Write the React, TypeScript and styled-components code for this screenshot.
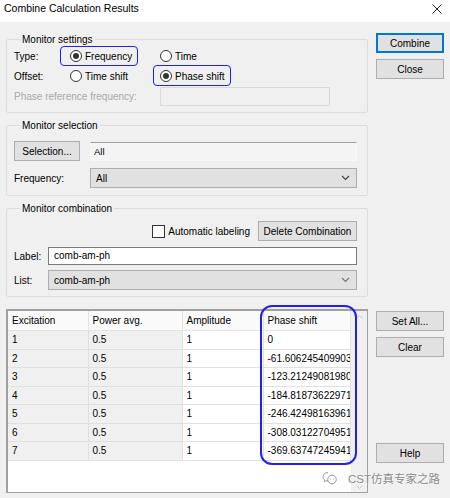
import { createGlobalStyle, styled } from "styled-components";

const GlobalStyle = createGlobalStyle`
  html, body {
    margin: 0;
    padding: 0;
    background: #f0f0f0;
  }
`;

const Dialog = styled.div`
  position: relative;
  width: 450px;
  height: 498px;
  overflow: hidden;
  background: #f0f0f0;
  color: #000;
  font-family: "Liberation Sans", Arial, sans-serif;
  font-size: 10px;
`;

const TitleBar = styled.div`
  display: flex;
  height: 22px;
  box-sizing: border-box;
  align-items: flex-start;
  justify-content: space-between;
  padding: 1px 8px 0 4px;
  background: #fff;
  font-size: 10.5px;
  line-height: 14px;
`;

const Body = styled.div`
  display: grid;
  grid-template-columns: 362px 68px;
  column-gap: 8px;
  padding-left: 6px;
`;

const LeftColumn = styled.div`
  display: flex;
  flex-direction: column;
`;

const ButtonColumn = styled.div<{ $top: number }>`
  display: flex;
  flex-direction: column;
  gap: 6px;
  padding-top: ${({ $top }) => $top}px;
`;

const Group = styled.fieldset<{ $top: number; $pad: string }>`
  margin: ${({ $top }) => $top}px 0 0;
  padding: ${({ $pad }) => $pad};
  min-width: 0;
  border: 1px solid #dcdcdc;
  border-radius: 2px;
`;

const Legend = styled.legend`
  margin-left: 6px;
  padding: 0 2px;
  line-height: 13px;
`;

const SettingsGrid = styled.div`
  display: grid;
  grid-template-columns: 56px 90px 1fr;
  grid-auto-rows: 20px;
  align-items: center;
`;

const Label = styled.span<{ $disabled?: boolean; $span?: number }>`
  grid-column: span ${({ $span }) => $span ?? 1};
  color: ${({ $disabled }) => ($disabled ? "#a8a8a8" : "#000")};
  white-space: nowrap;
`;

const RadioOption = styled.label<{ $mark?: string }>`
  position: relative;
  display: inline-flex;
  align-items: center;
  gap: 3px;
  height: 20px;
  white-space: nowrap;

  &::after {
    content: "";
    display: ${({ $mark }) => ($mark ? "block" : "none")};
    position: absolute;
    inset: ${({ $mark }) => $mark ?? "0"};
    border: 1.5px solid #2020f0;
    border-radius: 4px;
  }
`;

const RadioCircle = styled.span<{ $checked?: boolean }>`
  display: inline-grid;
  width: 12px;
  height: 12px;
  box-sizing: border-box;
  place-items: center;
  border: 1px solid #333;
  border-radius: 50%;
  background: #fff;

  &::before {
    content: "";
    display: ${({ $checked }) => ($checked ? "block" : "none")};
    width: 6px;
    height: 6px;
    border-radius: 50%;
    background: #333;
  }
`;

const DisabledInput = styled.div`
  width: 170px;
  height: 19px;
  box-sizing: border-box;
  border: 1px solid #d9d9d9;
  background: #f0f0f0;
`;

const FormRows = styled.div<{ $labelWidth: number; $gap: number }>`
  display: grid;
  grid-template-columns: ${({ $labelWidth }) => $labelWidth}px 1fr;
  row-gap: ${({ $gap }) => $gap}px;
  align-items: center;
`;

const Button = styled.button<{ $focused?: boolean; $width?: number; $push?: number }>`
  width: ${({ $width }) => ($width ? `${$width}px` : "100%")};
  height: 20px;
  box-sizing: border-box;
  margin-top: ${({ $push }) => $push ?? 0}px;
  padding: 0 4px;
  border: 1px solid ${({ $focused }) => ($focused ? "#0078d7" : "#adadad")};
  box-shadow: ${({ $focused }) => ($focused ? "inset 0 0 0 1px #0078d7" : "none")};
  background: #e1e1e1;
  color: #000;
  font-family: inherit;
  font-size: 10px;
  white-space: nowrap;
`;

const ReadOnlyField = styled.div`
  height: 19px;
  box-sizing: border-box;
  padding: 2px 3px;
  border: 1px solid #f8f8f8;
  border-top-color: #a0a0a0;
  background: #f4f4f4;
  font-size: 9.5px;
  line-height: 14px;
`;

const TextField = styled.div`
  height: 18px;
  box-sizing: border-box;
  padding: 1px 5px;
  border: 1px solid #7a7a7a;
  background: #fff;
  line-height: 14px;
`;

const Combo = styled.div`
  display: flex;
  height: 20px;
  box-sizing: border-box;
  align-items: center;
  justify-content: space-between;
  padding: 0 6px 0 5px;
  border: 1px solid #adadad;
  background: #e1e1e1;
`;

const CheckRow = styled.div`
  display: flex;
  align-items: center;
  justify-content: flex-end;
  gap: 8px;
  margin-bottom: 6px;
`;

const CheckLabel = styled.label`
  display: inline-flex;
  align-items: center;
  gap: 3px;
  white-space: nowrap;
`;

const CheckBox = styled.span`
  width: 13px;
  height: 13px;
  box-sizing: border-box;
  border: 1px solid #333;
  background: #fff;
`;

const TableArea = styled.div`
  position: relative;
  margin-top: 12px;
`;

const TableFrame = styled.div`
  display: flex;
  height: 184px;
  box-sizing: border-box;
  border: 1px solid #a0a0a0;
  border-top-width: 2px;
  border-left-width: 2px;
  background: #fff;
`;

const Table = styled.table`
  width: 342px;
  align-self: flex-start;
  border-collapse: collapse;
  table-layout: fixed;
  font-size: 10px;
`;

const HeadCell = styled.th`
  height: 19px;
  padding: 0 4px;
  border-right: 1px solid #e3e3e3;
  border-bottom: 1px solid #e3e3e3;
  background: #fafafa;
  font-weight: 400;
  text-align: left;
  white-space: nowrap;
`;

const Cell = styled.td<{ $shaded?: boolean }>`
  height: 17.5px;
  padding: 0 4px;
  overflow: hidden;
  border-right: 1px solid #e0e0e0;
  border-bottom: 1px solid #e0e0e0;
  background: ${({ $shaded }) => ($shaded ? "#f0f0f0" : "#fff")};
  text-overflow: clip;
  white-space: nowrap;
`;

const ScrollTrack = styled.div`
  display: flex;
  width: 16px;
  flex-direction: column;
  align-items: center;
  justify-content: space-between;
  padding: 4px 0 3px;
  margin-left: auto;
  background: #f0f0f0;
`;

const ColumnMark = styled.div`
  position: absolute;
  top: -4px;
  left: 254px;
  width: 97px;
  height: 160px;
  box-sizing: border-box;
  border: 2px solid #2020f0;
  border-radius: 12px;
  pointer-events: none;
`;

const Watermark = styled.div`
  position: absolute;
  top: 470px;
  left: 322px;
  display: flex;
  align-items: center;
  gap: 10px;
  color: #8a8a8a;
  font-family: "Liberation Sans", "Noto Sans CJK SC", sans-serif;
  font-size: 11.5px;
  text-shadow: 0 0 2px #fff;
`;

const Chevron = ({ color = "#555" }: { color?: string }) => (
  <svg width="9" height="6" viewBox="0 0 9 6">
    <path d="M1 1l3.5 3.5L8 1" fill="none" stroke={color} strokeWidth="1.2" />
  </svg>
);

const rows = [
  ["1", "0"],
  ["2", "-61.6062454099033"],
  ["3", "-123.212490819807"],
  ["4", "-184.818736229710"],
  ["5", "-246.424981639614"],
  ["6", "-308.031227049517"],
  ["7", "-369.637472459410"],
];

export default function App() {
  return (
    <Dialog>
      <GlobalStyle />
      <TitleBar>
        <span>Combine Calculation Results</span>
        <svg width="10" height="10" viewBox="0 0 10 10" style={{ marginTop: 3 }}>
          <path d="M0.5 0.5l9 9M9.5 0.5l-9 9" stroke="#222" strokeWidth="1" />
        </svg>
      </TitleBar>
      <Body>
        <LeftColumn>
          <Group $top={11} $pad="0 7px 6px 7px">
            <Legend>Monitor settings</Legend>
            <SettingsGrid>
              <Label>Type:</Label>
              <div>
                <RadioOption $mark="0 -6px 0 -10px">
                  <RadioCircle $checked />
                  Frequency
                </RadioOption>
              </div>
              <div>
                <RadioOption>
                  <RadioCircle />
                  Time
                </RadioOption>
              </div>
              <Label>Offset:</Label>
              <div>
                <RadioOption>
                  <RadioCircle />
                  Time shift
                </RadioOption>
              </div>
              <div>
                <RadioOption $mark="-1px -7px 0 -7px">
                  <RadioCircle $checked />
                  Phase shift
                </RadioOption>
              </div>
              <Label $disabled $span={2}>
                Phase reference frequency:
              </Label>
              <DisabledInput />
            </SettingsGrid>
          </Group>

          <Group $top={6} $pad="9px 10px 7px 7px">
            <Legend>Monitor selection</Legend>
            <FormRows $labelWidth={76} $gap={7}>
              <Button $width={66}>Selection...</Button>
              <ReadOnlyField>All</ReadOnlyField>
              <Label>Frequency:</Label>
              <Combo>
                <span>All</span>
                <Chevron color="#444" />
              </Combo>
            </FormRows>
          </Group>

          <Group $top={6} $pad="6px 10px 6px 7px">
            <Legend>Monitor combination</Legend>
            <CheckRow>
              <CheckLabel>
                <CheckBox />
                Automatic labeling
              </CheckLabel>
              <Button $width={99}>Delete Combination</Button>
            </CheckRow>
            <FormRows $labelWidth={34} $gap={5}>
              <Label>Label:</Label>
              <TextField>comb-am-ph</TextField>
              <Label>List:</Label>
              <Combo>
                <span>comb-am-ph</span>
                <Chevron color="#777" />
              </Combo>
            </FormRows>
          </Group>
        </LeftColumn>

        <ButtonColumn $top={11}>
          <Button $focused>Combine</Button>
          <Button>Close</Button>
        </ButtonColumn>

        <TableArea>
          <TableFrame>
            <Table>
              <colgroup>
                <col style={{ width: 80 }} />
                <col style={{ width: 94 }} />
                <col style={{ width: 81 }} />
                <col style={{ width: 87 }} />
              </colgroup>
              <thead>
                <tr>
                  <HeadCell>Excitation</HeadCell>
                  <HeadCell>Power avg.</HeadCell>
                  <HeadCell>Amplitude</HeadCell>
                  <HeadCell>Phase shift</HeadCell>
                </tr>
              </thead>
              <tbody>
                {rows.map(([n, phase]) => (
                  <tr key={n}>
                    <Cell $shaded>{n}</Cell>
                    <Cell $shaded>0.5</Cell>
                    <Cell>1</Cell>
                    <Cell>{phase}</Cell>
                  </tr>
                ))}
              </tbody>
            </Table>
            <ScrollTrack>
              <svg width="7" height="4" viewBox="0 0 7 4">
                <path d="M0.5 3.5L3.5 0.5L6.5 3.5" fill="none" stroke="#c8c8c8" />
              </svg>
              <svg width="7" height="4" viewBox="0 0 7 4">
                <path d="M0.5 0.5L3.5 3.5L6.5 0.5" fill="none" stroke="#c8c8c8" />
              </svg>
            </ScrollTrack>
          </TableFrame>
          <ColumnMark />
        </TableArea>

        <ButtonColumn $top={14}>
          <Button>Set All...</Button>
          <Button>Clear</Button>
          <Button $push={80}>Help</Button>
        </ButtonColumn>
      </Body>
      <Watermark>
        <svg width="16" height="14" viewBox="0 0 16 14">
          <path
            d="M6 1.5C3.2 1.5 1 3.4 1 5.8c0 1.3.7 2.5 1.8 3.3L2.4 10.8l2-1.1c.5.2 1 .3 1.6.3"
            fill="none"
            stroke="#9a9a9a"
            strokeWidth="1"
          />
          <circle cx="10" cy="8.5" r="4.3" fill="none" stroke="#9a9a9a" strokeWidth="1" />
          <circle cx="8.5" cy="8" r="0.6" fill="#9a9a9a" />
          <circle cx="11.5" cy="8" r="0.6" fill="#9a9a9a" />
        </svg>
        <span>CST仿真专家之路</span>
      </Watermark>
    </Dialog>
  );
}
